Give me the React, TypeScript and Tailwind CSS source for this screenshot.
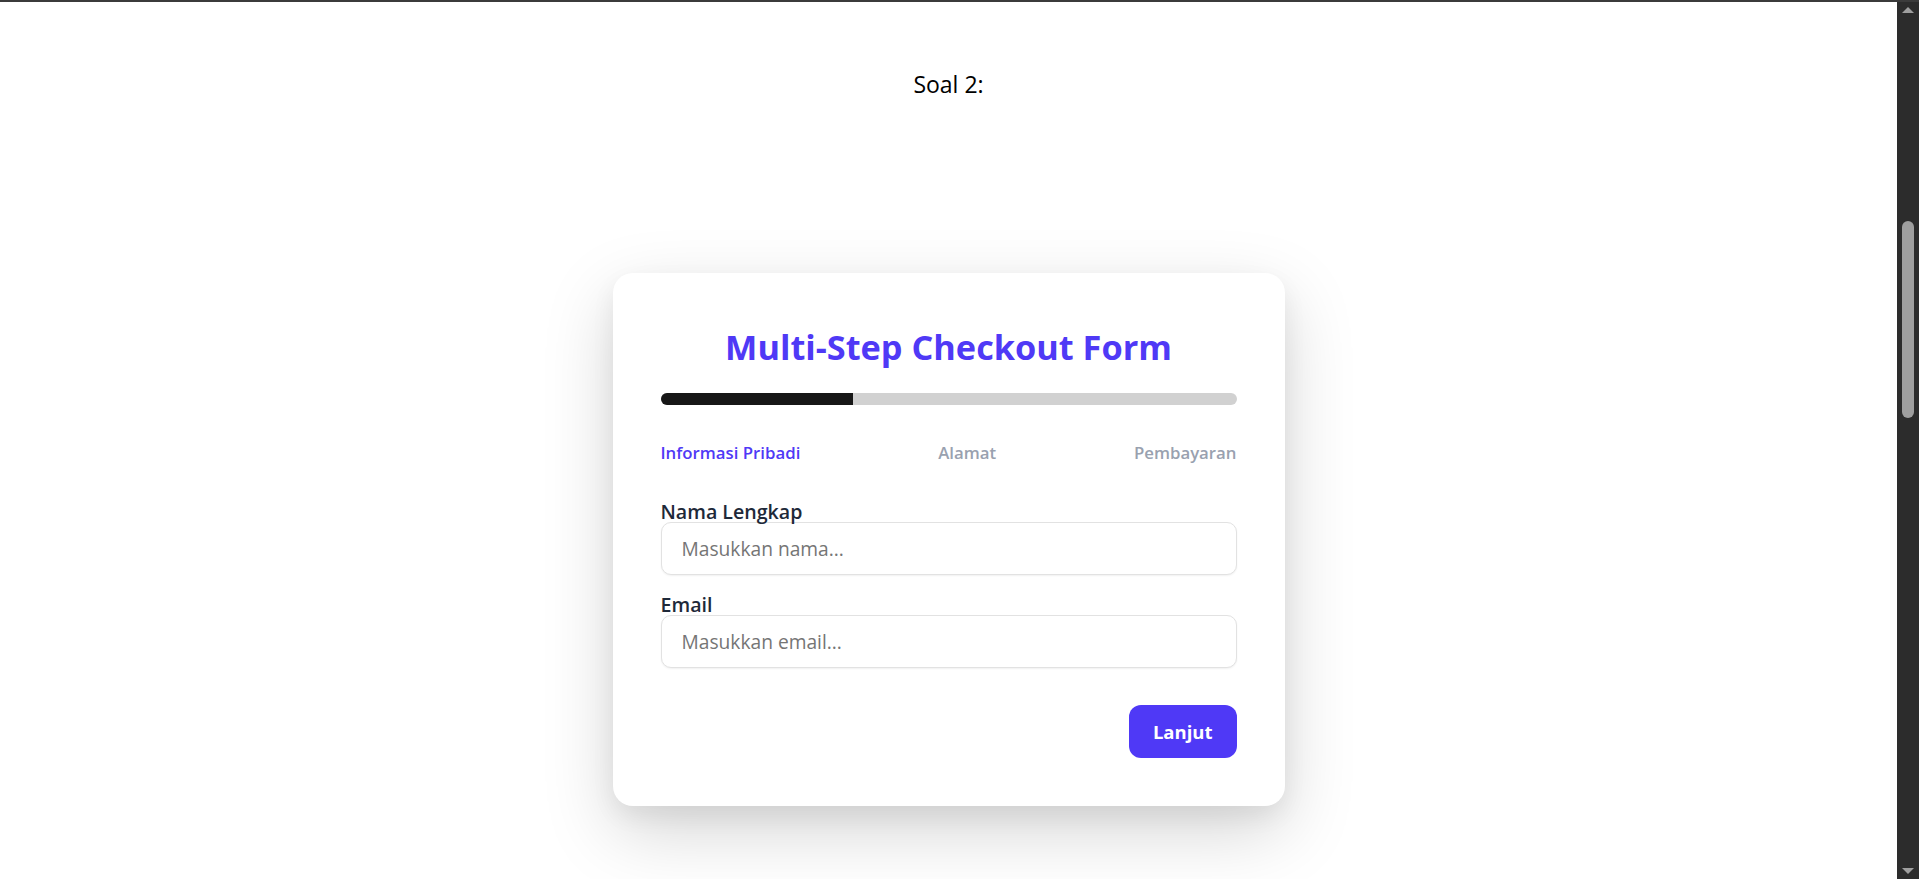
export default function App() {
  return (
    <div className="flex h-[879px] flex-col overflow-hidden bg-white font-['Open_Sans',sans-serif] text-black">
      {/* top edge */}
      <div className="h-[2px] bg-[#3b3b3b]" />

      <div className="flex min-h-0 flex-1">
        <main className="min-w-0 flex-1">
          <p className="pt-[67px] text-center text-[23px] leading-[30px]">Soal 2:</p>

          {/* Card */}
          <div className="mx-auto mt-[174px] w-[672px] rounded-[20px] bg-white p-12 shadow-[0_10px_25px_rgba(0,0,0,0.06),0_25px_70px_rgba(0,0,0,0.17)]">
            <h1 className="text-center text-[34.3px] leading-[52px] font-bold text-indigo-600">
              Multi-Step Checkout Form
            </h1>

            <div className="mt-5 h-3 overflow-hidden rounded-full bg-[#d1d1d1]">
              <div className="h-full w-1/3 bg-[#171717]" />
            </div>

            <div className="mt-9 flex items-center justify-between text-[16.8px] leading-6 font-semibold">
              <span className="text-indigo-600">Informasi Pribadi</span>
              <span className="text-gray-400">Alamat</span>
              <span className="text-gray-400">Pembayaran</span>
            </div>

            <div className="mt-[37px]">
              <Field label="Nama Lengkap" placeholder="Masukkan nama..." />
            </div>
            <div className="mt-5">
              <Field label="Email" placeholder="Masukkan email..." type="email" />
            </div>

            <div className="mt-[37px] flex justify-end">
              <button className="h-[53px] rounded-xl bg-indigo-600 px-6 text-[18.5px] font-bold text-white">
                Lanjut
              </button>
            </div>
          </div>
        </main>

        {/* Scrollbar */}
        <div className="flex w-[22px] flex-col items-center bg-[#2c2c2c]">
          <svg width="14" height="8" viewBox="0 0 14 8" className="mt-[4px]">
            <path d="M7 1 L13 7 L1 7 Z" fill="#9f9f9f" />
          </svg>
          <div className="mt-[207px] h-[197px] w-[12px] rounded-full bg-[#9f9f9f]" />
          <div className="flex-1" />
          <svg width="14" height="8" viewBox="0 0 14 8" className="mb-[4px]">
            <path d="M1 1 L13 1 L7 7 Z" fill="#9f9f9f" />
          </svg>
        </div>
      </div>
    </div>
  );
}

function Field({
  label,
  placeholder,
  type = "text",
}: {
  label: string;
  placeholder: string;
  type?: string;
}) {
  return (
    <div>
      <label className="block text-[19.6px] leading-5 font-semibold text-gray-800">
        {label}
      </label>
      <input
        type={type}
        placeholder={placeholder}
        className="block h-[53px] w-full rounded-[10px] border border-[#e2e2e2] bg-white px-5 text-[19.2px] shadow-[0_1px_2px_rgba(0,0,0,0.06)] outline-none placeholder:text-[#757575]"
      />
    </div>
  );
}
